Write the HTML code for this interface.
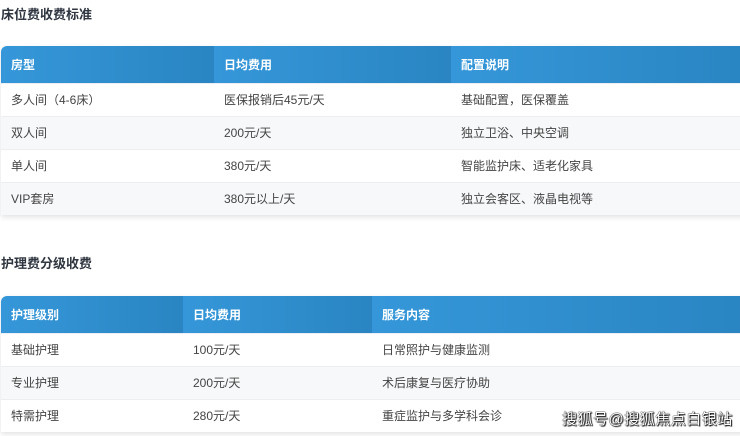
<html><head><style>
body{margin:0;width:740px;height:436px;background:#fff;font-family:"Liberation Sans","Noto Sans CJK SC",sans-serif;position:relative;overflow:hidden}
h3{position:absolute;left:1px;margin:0;font-size:13px;font-weight:bold;color:#2f3640}
table{position:absolute;left:1px;width:745px;border-collapse:collapse;box-shadow:0 2px 6px rgba(0,0,0,.12);border-radius:6px 0 0 0;overflow:hidden}
th{height:37px;text-align:left;padding:0 0 0 10px;color:#fff;font-size:12px;font-weight:bold;background:linear-gradient(90deg,#3597d9,#2a85c2)}
td{height:33px;padding:0 0 0 10px;font-size:12px;color:#444;border-top:1px solid #eceef1}
tr:nth-child(odd) td{background:#f7f8fa}
.wm{position:absolute;left:562px;top:408px;font-size:15px;color:#fff;text-shadow:0 0 1px #000,0 0 1px #000,1px 1px 1px #000;letter-spacing:0.5px}
</style></head><body>
<h3 style="top:4px">床位费收费标准</h3>
<table style="top:46px">
<tr><th style="width:203px">房型</th><th style="width:227px">日均费用</th><th>配置说明</th></tr>
<tr><td>多人间（4-6床）</td><td>医保报销后45元/天</td><td>基础配置，医保覆盖</td></tr>
<tr><td>双人间</td><td>200元/天</td><td>独立卫浴、中央空调</td></tr>
<tr><td>单人间</td><td>380元/天</td><td>智能监护床、适老化家具</td></tr>
<tr><td>VIP套房</td><td>380元以上/天</td><td>独立会客区、液晶电视等</td></tr>
</table>
<h3 style="top:253px">护理费分级收费</h3>
<table style="top:296px">
<tr><th style="width:172px">护理级别</th><th style="width:179px">日均费用</th><th>服务内容</th></tr>
<tr><td>基础护理</td><td>100元/天</td><td>日常照护与健康监测</td></tr>
<tr><td>专业护理</td><td>200元/天</td><td>术后康复与医疗协助</td></tr>
<tr><td>特需护理</td><td>280元/天</td><td>重症监护与多学科会诊</td></tr>
</table>
<div class="wm">搜狐号@搜狐焦点白银站</div>
</body></html>
